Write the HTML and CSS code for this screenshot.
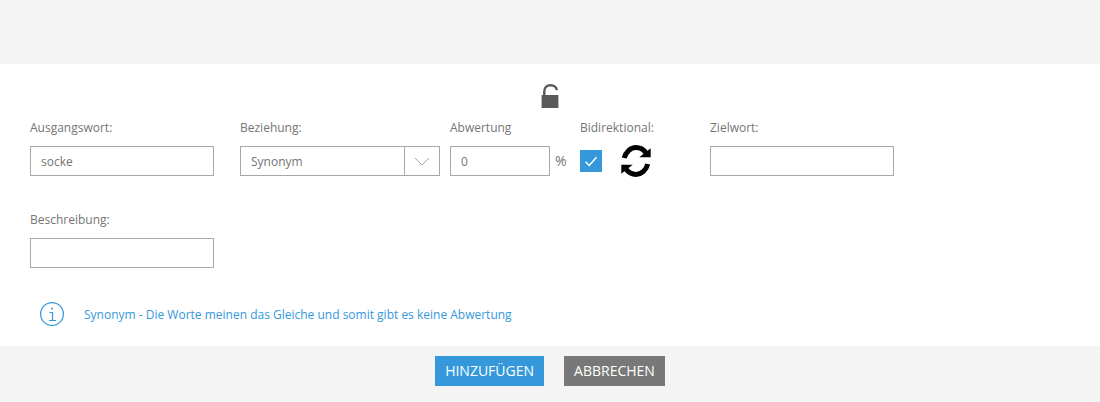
FILE: index.html
```html
<!DOCTYPE html>
<html lang="de">
<head>
<meta charset="utf-8">
<title>Relation</title>
<link rel="stylesheet" href="styles.css">
</head>
<body>
<div class="top"></div>
<main class="panel">
  <div class="lock-row">
    <svg class="lock" width="18" height="25" viewBox="0 0 18 25"><path d="M3.300 11.500V7.200C3.300 3.500 5.800 1.200 9.500 1.200S15.700 3.500 15.700 6.200" fill="none" stroke="#595959" stroke-width="2.400"/><rect x="0.600" y="11" width="16.800" height="13" fill="#595959"/></svg>
  </div>
  <div class="row">
    <div class="field f1">
      <label>Ausgangswort:</label>
      <div class="input">socke</div>
    </div>
    <div class="field f2">
      <label>Beziehung:</label>
      <div class="select">
        <span class="select-value">Synonym</span>
        <span class="select-btn"><svg width="16" height="9" viewBox="0 0 16 9"><path d="M1 1l7 7 7-7" fill="none" stroke="#a8a8a8" stroke-width="1"/></svg></span>
      </div>
    </div>
    <div class="field f3">
      <label>Abwertung</label>
      <div class="pct">
        <div class="input small">0</div>
        <span class="pct-sign">%</span>
      </div>
    </div>
    <div class="field f4">
      <label>Bidirektional:</label>
      <div class="bidi">
        <span class="check"><svg width="14" height="11" viewBox="0 0 14 11"><path d="M1.500 5.800l3.700 3.700 7.300-8.300" fill="none" stroke="#fff" stroke-width="1.500"/></svg></span>
        <svg class="sync" width="32" height="33" viewBox="0 0 32 33"><path d="M4.200 13C5.700 7 10.500 2.600 16 2.600c3.800 0 7.500 1.900 10 5.400" fill="none" stroke="#000" stroke-width="5"/><path d="M30.700 3.300V12.300H19.300z" fill="#000"/><path d="M27.800 19C26.300 25 21.500 29.400 16 29.400c-3.800 0-7.500-1.900-10-5.400" fill="none" stroke="#000" stroke-width="5"/><path d="M1.300 28.700V19.700H12.700z" fill="#000"/></svg>
      </div>
    </div>
    <div class="field f5">
      <label>Zielwort:</label>
      <div class="input"></div>
    </div>
  </div>
  <div class="row second">
    <div class="field f1">
      <label>Beschreibung:</label>
      <div class="input"></div>
    </div>
  </div>
  <div class="hint">
    <svg class="info" width="24" height="24" viewBox="0 0 24 24"><circle cx="12" cy="12" r="11.400" fill="none" stroke="#3498db" stroke-width="1.200"/><path d="M9.500 10.500h3v8M9 18.500h7" fill="none" stroke="#3498db" stroke-width="1.200"/><circle cx="12" cy="6.500" r="1" fill="#3498db"/></svg>
    <span class="hint-text">Synonym - Die Worte meinen das Gleiche und somit gibt es keine Abwertung</span>
  </div>
</main>
<footer class="foot">
  <button class="btn primary">HINZUFÜGEN</button>
  <button class="btn secondary">ABBRECHEN</button>
</footer>
</body>
</html>
```
FILE: styles.css
```css
* { box-sizing: border-box; }
html, body { margin: 0; padding: 0; }
body {
  width: 1100px;
  height: 402px;
  overflow: hidden;
  background: #f4f4f4;
  font-family: "Open Sans", sans-serif;
  font-size: 12px;
  color: #757575;
}
.top { height: 64px; }
.panel {
  height: 282px;
  background: #fff;
  padding: 0 30px;
}
.lock-row {
  height: 56px;
  padding-top: 20px;
  display: flex;
  justify-content: center;
}
.lock { display: block; }
.row { display: flex; }
.second { margin-top: 34px; }
.field { display: flex; flex-direction: column; flex: none; }
.field label { height: 26px; line-height: 15px; display: block; }
.f1 { width: 210px; }
.f2 { width: 210px; }
.f3 { width: 130px; }
.f4 { width: 130px; }
.f5 { width: 184px; }
.input {
  width: 184px;
  height: 30px;
  border: 1px solid #a8a8a8;
  padding: 0 10px;
  line-height: 30px;
  background: #fff;
}
.small { width: 100px; }
.select {
  width: 200px;
  height: 30px;
  border: 1px solid #a8a8a8;
  display: flex;
}
.select-value { flex: 1; padding: 0 10px; line-height: 30px; }
.select-btn {
  width: 35px;
  border-left: 1px solid #a8a8a8;
  display: flex;
  align-items: center;
  justify-content: center;
}
.pct { display: flex; }
.pct-sign { margin-left: 5px; line-height: 30px; font-size: 14px; }
.bidi { display: flex; }
.check {
  width: 22px;
  height: 22px;
  margin-top: 4px;
  background: #3498db;
  display: flex;
  align-items: center;
  justify-content: center;
}
.sync { margin-left: 18px; margin-top: -1px; }
.hint {
  margin-top: 34px;
  padding-left: 10px;
  display: flex;
  align-items: center;
  color: #3498db;
}
.hint-text { margin-left: 20px; }
.info { display: block; }
.foot {
  height: 56px;
  padding-top: 10px;
  display: flex;
  justify-content: center;
  gap: 20px;
}
.btn {
  height: 30px;
  border: 0;
  padding: 0 10px;
  color: #fff;
  font-family: "Open Sans", sans-serif;
  font-size: 14px;
  font-weight: 500;
  line-height: 30px;
}
.primary { background: #3498db; }
.secondary { background: #787878; }
```
